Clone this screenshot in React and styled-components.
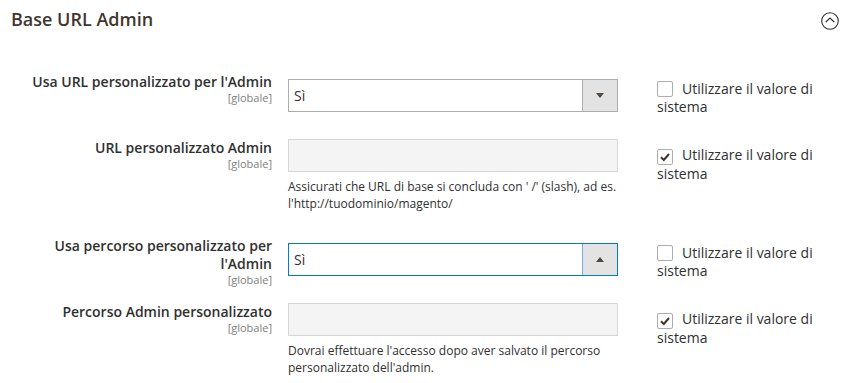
import React from 'react'
import styled, { createGlobalStyle } from 'styled-components'

const GlobalStyle = createGlobalStyle`
  body {
    margin: 0;
    background: #fff;
    font-family: 'Open Sans', 'Noto Sans', sans-serif;
    color: #303030;
  }
`

const rows = [
  { label: "Usa URL personalizzato per l'Admin", kind: 'select', value: 'Sì', checked: false },
  {
    label: 'URL personalizzato Admin',
    kind: 'input',
    checked: true,
    note: "Assicurati che URL di base si concluda con ' /' (slash), ad es. l'http://tuodominio/magento/",
  },
  { label: "Usa percorso personalizzato per l'Admin", kind: 'select', value: 'Sì', checked: false, focused: true },
  {
    label: 'Percorso Admin personalizzato',
    kind: 'input',
    checked: true,
    note: "Dovrai effettuare l'accesso dopo aver salvato il percorso personalizzato dell'admin.",
  },
]

const App = () => {
  return (
    <>
      <GlobalStyle />
      <Section>
        <Header>
          <Title>Base URL Admin</Title>
          <Toggle>
            <svg width='18' height='18' viewBox='0 0 18 18'>
              <circle cx='9' cy='9' r='8.3' fill='none' stroke='#303030' strokeWidth='1.1' />
              <polyline points='4.8,10 9,6 13.2,10' fill='none' stroke='#303030' strokeWidth='1.2' />
            </svg>
          </Toggle>
        </Header>
        <Fieldset>
          {rows.map((r, i) => (
            <Row key={i}>
              <Label>
                {r.label}
                <Scope>[globale]</Scope>
              </Label>
              <Control $offset={r.kind === 'select' ? 6 : 0}>
                {r.kind === 'select' ? (
                  <Select $focused={r.focused}>
                    <SelectValue>{r.value}</SelectValue>
                    <SelectButton $focused={r.focused}>
                      <Arrow $up={r.focused} />
                    </SelectButton>
                  </Select>
                ) : (
                  <DisabledInput />
                )}
                {r.note && <Note>{r.note}</Note>}
              </Control>
              <UseDefault>
                <Box $checked={r.checked}>
                  {r.checked && (
                    <svg width='12' height='12' viewBox='0 0 12 12'>
                      <polyline points='2,6.2 4.8,9 10,3' fill='none' stroke='#41362f' strokeWidth='2' />
                    </svg>
                  )}
                </Box>
                Utilizzare il valore di sistema
              </UseDefault>
            </Row>
          ))}
        </Fieldset>
      </Section>
    </>
  )
}

const Section = styled.div`
  width: 852px;
`

const Header = styled.div`
  display: flex;
  justify-content: space-between;
  align-items: flex-start;
  height: 40px;
  padding: 8px 13px 0 11px;
  box-sizing: border-box;
`

const Title = styled.h2`
  margin: 0;
  font-size: 18px;
  line-height: 22px;
  font-weight: 600;
  color: #41362f;
`

const Toggle = styled.div`
  margin-top: 4px;
  width: 18px;
  height: 18px;
  svg {
    display: block;
  }
`

const Fieldset = styled.div`
  padding-top: 33px;
`

const Row = styled.div`
  display: flex;
  align-items: flex-start;
`

const Label = styled.div`
  width: 272px;
  padding-left: 22px;
  box-sizing: border-box;
  text-align: right;
  font-size: 14px;
  line-height: 18px;
  font-weight: 600;
  color: #303030;
`

const Scope = styled.span`
  display: block;
  margin-top: 0;
  font-size: 11px;
  line-height: 13px;
  font-weight: 400;
  color: #808080;
`

const Control = styled.div`
  width: 330px;
  margin-left: 16px;
  padding-top: ${p => p.$offset}px;
  padding-bottom: 27px;
`

const Select = styled.div`
  display: flex;
  height: 33px;
  box-sizing: border-box;
  border: 1px solid ${p => (p.$focused ? '#007bdb' : '#adadad')};
  background: #fff;
`

const SelectValue = styled.div`
  flex: 1;
  padding-left: 5px;
  font-size: 14px;
  line-height: 31px;
  color: #303030;
`

const SelectButton = styled.div`
  width: 34px;
  display: flex;
  align-items: center;
  justify-content: center;
  background: #e3e3e3;
  border-left: 1px solid ${p => (p.$focused ? '#72aee3' : '#adadad')};
`

const Arrow = styled.span`
  width: 0;
  height: 0;
  border-left: 4px solid transparent;
  border-right: 4px solid transparent;
  ${p => (p.$up ? 'border-bottom: 5px solid #514943;' : 'border-top: 5px solid #514943;')}
`

const DisabledInput = styled.div`
  height: 33px;
  box-sizing: border-box;
  border: 1px solid #d6d6d6;
  background: #f4f4f4;
`

const Note = styled.div`
  margin-top: 6px;
  margin-bottom: -2px;
  font-size: 12px;
  line-height: 17px;
  color: #303030;
`

const UseDefault = styled.div`
  width: 180px;
  margin-left: 39px;
  padding-top: 7px;
  font-size: 14px;
  line-height: 18px;
  color: #303030;
`

const Box = styled.span`
  display: inline-flex;
  align-items: center;
  justify-content: center;
  width: 16px;
  height: 16px;
  box-sizing: border-box;
  margin-right: 9px;
  vertical-align: -3px;
  border: 1px solid #adadad;
  border-radius: 2px;
  background: #fff;
`

export default App
